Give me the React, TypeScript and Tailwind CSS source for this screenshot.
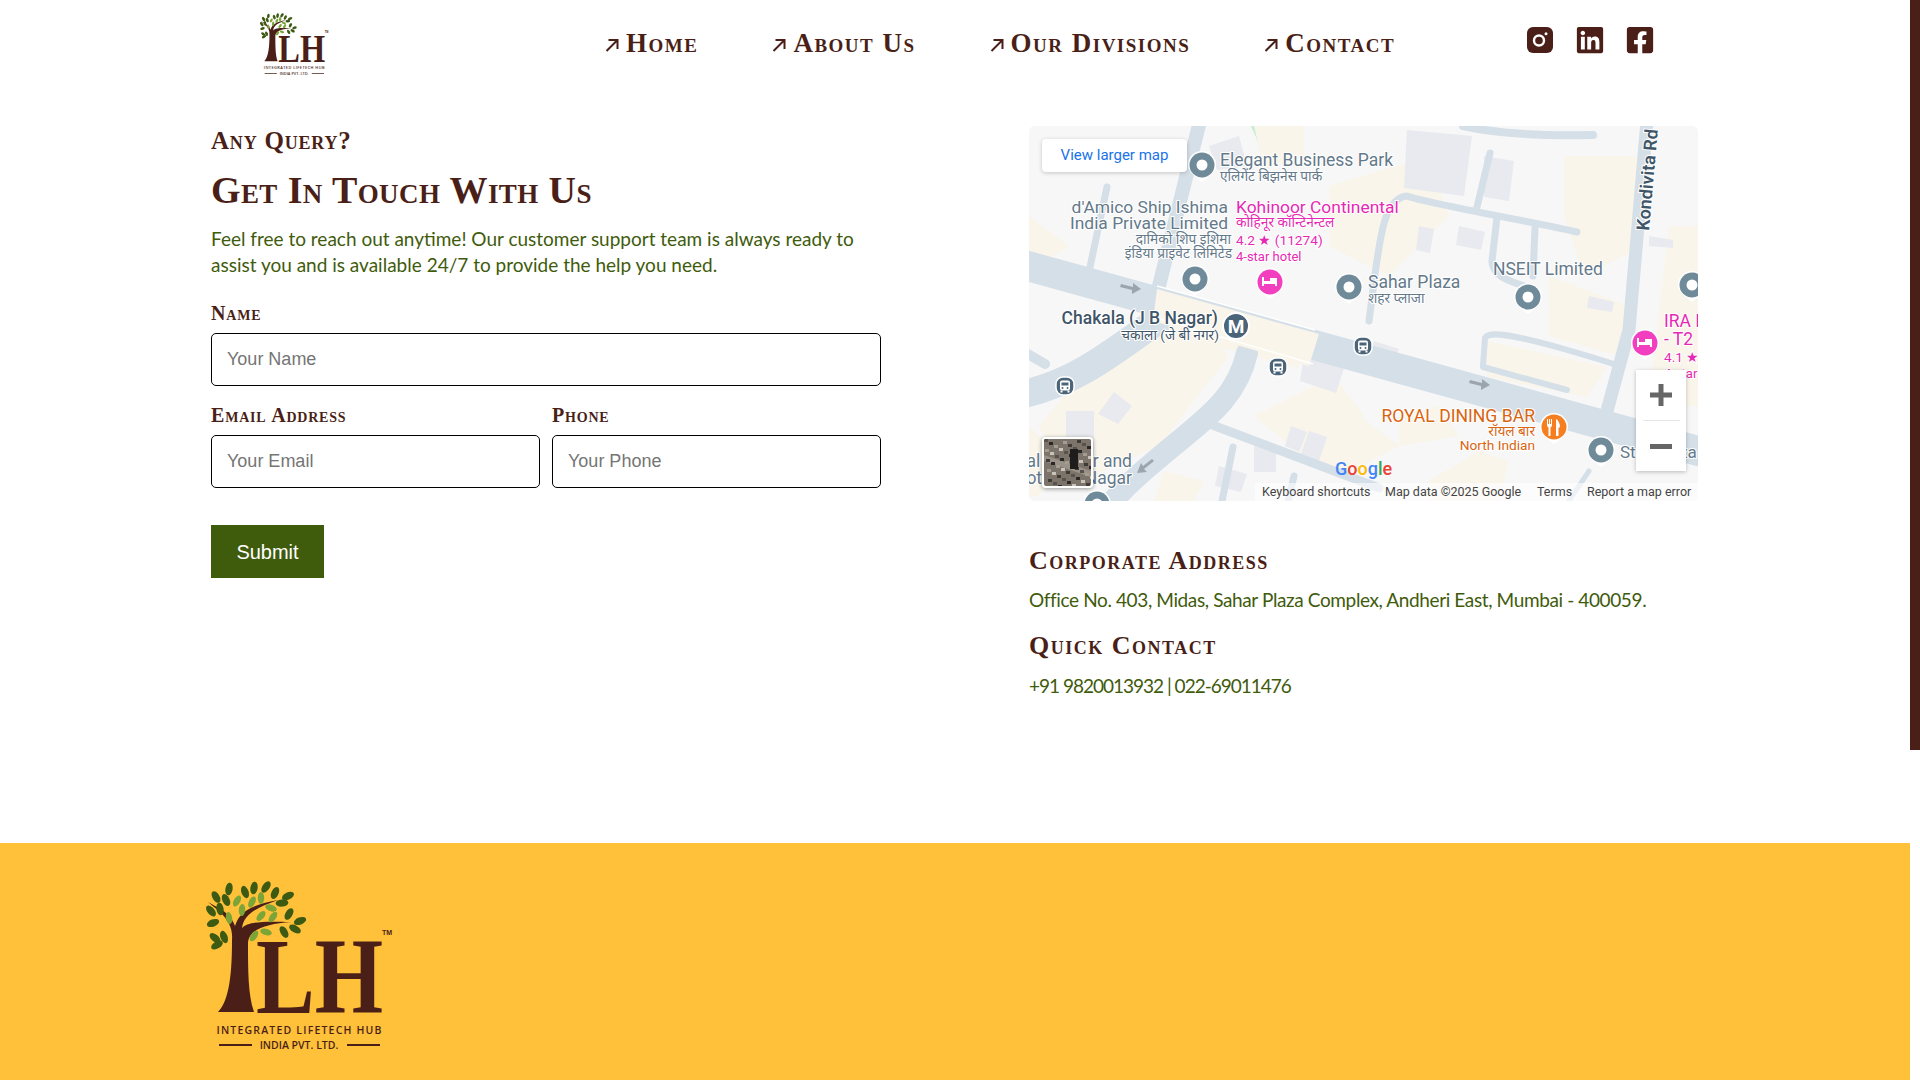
import { FaFacebookSquare, FaLinkedin } from 'react-icons/fa'

const NAV = ['Home', 'About Us', 'Our Divisions', 'Contact']

const DARK_LEAVES: number[][] = [
  [39, 19, 10], [55, 22, -20], [64, 18, 10], [76, 17, 35], [85, 23, 25], [98, 26, 65], [92, 33, 85],
  [26, 27, -30], [36, 30, -25], [21, 41, -40], [30, 39, -10], [99, 44, 30], [110, 51, 70], [23, 53, 70],
  [105, 59, -60], [94, 62, -30], [25, 68, -50], [34, 67, -20], [27, 75, 60],
]
const LIGHT_LEAVES: number[][] = [
  [47, 31, 30], [62, 32, 25], [71, 28, 0], [52, 40, 5], [39, 48, -10], [81, 38, -70], [83, 47, 35],
  [71, 46, 40], [76, 62, -75], [64, 66, 35],
]

function FullLogo({ className }: { className: string }) {
  return (
    <svg viewBox="0 0 220 190" className={className} fill="#4a1f17">
      <path d="M42 70 C43 58 38 50 30 42 L18 32 L32 40 C38 44 43 50 45 56 C49 44 56 36 88 30 C66 38 54 44 52 58 C58 52 70 51 101 52 C78 54 60 58 58 72 C58 100 58 125 64 142 L28 142 C40 130 42 100 42 70 Z" />
      {DARK_LEAVES.map(([x, y, r], i) => (
        <ellipse key={i} cx={x} cy={y} rx="3.6" ry="6.4" fill="#3d5a12" transform={`rotate(${r} ${x} ${y})`} />
      ))}
      {LIGHT_LEAVES.map(([x, y, r], i) => (
        <ellipse key={i} cx={x} cy={y} rx="3.2" ry="6" fill="#7ba537" transform={`rotate(${r} ${x} ${y})`} />
      ))}
      <text x="66" y="143" fontFamily="Liberation Serif, serif" fontSize="108" fontWeight="700" textLength="127" lengthAdjust="spacingAndGlyphs">
        LH
      </text>
      <text x="192" y="65" fontFamily="Liberation Sans, sans-serif" fontSize="7" fontWeight="700">
        TM
      </text>
      <text x="109" y="164" textAnchor="middle" fontFamily="Open Sans, sans-serif" fontSize="10.5" fontWeight="600" textLength="165" lengthAdjust="spacing">
        INTEGRATED LIFETECH HUB
      </text>
      <text x="109" y="179" textAnchor="middle" fontFamily="Open Sans, sans-serif" fontSize="10.5" fontWeight="600">
        INDIA PVT. LTD.
      </text>
      <rect x="29" y="174" width="33" height="2" />
      <rect x="157" y="174" width="33" height="2" />
    </svg>
  )
}

function Instagram() {
  return (
    <svg viewBox="0 0 26 26" className="h-[26px] w-[26px]">
      <rect width="26" height="26" rx="6" fill="#4a1f17" />
      <circle cx="12" cy="13.5" r="5" fill="none" stroke="#fff" strokeWidth="2.4" />
      <circle cx="19" cy="6.8" r="1.5" fill="#fff" />
    </svg>
  )
}

function Pin({ x, y, color = '#6f8a99', hole = true }: { x: number; y: number; color?: string; hole?: boolean }) {
  return (
    <g>
      <path d={`M${x - 14} ${y} a14 14 0 1 1 28 0 c0 6 -6 11 -14 17 c-8 -6 -14 -11 -14 -17 Z`} fill="#fff" />
      <circle cx={x} cy={y} r="12.5" fill={color} />
      {hole && <circle cx={x} cy={y} r="5.5" fill="#fff" />}
    </g>
  )
}

function Bus({ x, y }: { x: number; y: number }) {
  return (
    <g>
      <rect x={x - 9} y={y - 9} width="18" height="18" rx="7" fill="#4c6479" stroke="#fff" strokeWidth="1.5" />
      <rect x={x - 5} y={y - 5.500} width="10" height="10" rx="2" fill="#fff" />
      <rect x={x - 3.5} y={y - 3.500} width="7" height="3" fill="#4c6479" />
      <circle cx={x - 2.5} cy={y + 2} r="1" fill="#4c6479" />
      <circle cx={x + 2.5} cy={y + 2} r="1" fill="#4c6479" />
      <rect x={x - 4.5} y={y + 4.500} width="2" height="2" fill="#fff" />
      <rect x={x + 2.5} y={y + 4.500} width="2" height="2" fill="#fff" />
    </g>
  )
}

const LABELS: { x: number; y: number; t: string; s?: number; c?: string; end?: boolean; w?: number }[] = [
  { x: 191, y: 40, t: 'Elegant Business Park', s: 17.5 },
  { x: 191, y: 55, t: 'एलिगेंट बिझनेस पार्क', s: 13.7 },
  { x: 199, y: 87, t: "d'Amico Ship Ishima", s: 17.4, end: true },
  { x: 199, y: 103, t: 'India Private Limited', s: 17.4, end: true },
  { x: 202, y: 118, t: 'दामिको शिप इशिमा', s: 13.7, end: true },
  { x: 203, y: 132, t: 'इंडिया प्राइवेट लिमिटेड', s: 13.7, end: true },
  { x: 207, y: 87, t: 'Kohinoor Continental', s: 17.4, c: '#e629b3' },
  { x: 207, y: 101, t: 'कोहिनूर कॉन्टिनेन्टल', s: 13.7, c: '#e629b3' },
  { x: 207, y: 119, t: '4.2 ★ (11274)', s: 13.7, c: '#e629b3' },
  { x: 207, y: 135, t: '4-star hotel', s: 13, c: '#e629b3' },
  { x: 189, y: 198, t: 'Chakala (J B Nagar)', s: 17.5, c: '#3f5568', end: true, w: 500 },
  { x: 190, y: 214, t: 'चकाला (जे बी नगर)', s: 13.7, c: '#3f5568', end: true },
  { x: 339, y: 162, t: 'Sahar Plaza', s: 17.5 },
  { x: 339, y: 177, t: 'शहर प्लाजा', s: 13.7 },
  { x: 464, y: 149, t: 'NSEIT Limited', s: 17.5 },
  { x: 635, y: 201, t: 'IRA Inn', s: 17.5, c: '#e629b3' },
  { x: 635, y: 219, t: '- T2', s: 17.5, c: '#e629b3' },
  { x: 635, y: 236, t: '4.1 ★', s: 13.7, c: '#e629b3' },
  { x: 635, y: 252, t: '4-star', s: 13, c: '#e629b3' },
  { x: 506, y: 296, t: 'ROYAL DINING BAR', s: 17.6, c: '#d9640f', end: true },
  { x: 506, y: 310, t: 'रॉयल बार', s: 13.7, c: '#d9640f', end: true },
  { x: 506, y: 324, t: 'North Indian', s: 13.7, c: '#d9640f', end: true },
  { x: 591, y: 332, t: 'Star Plaza', s: 17 },
  { x: 103, y: 341, t: 'Local Bazaar and', s: 17.5, end: true },
  { x: 103, y: 358, t: 'Plots J B Nagar', s: 17.5, end: true },
]

const BEIGE = [
  'M225 0h50v30l-40 12z', 'M300 60l100-30 20 60-60 60-60-30z', 'M535 30h80v90l-60 30-20-60z',
  'M640 100h29v180h-50z', 'M128 170l160 40-20 32-150-40z', 'M60 240l100-50 40 40-70 90-90 40-30-60z',
  'M225 290l80-40 30 40-60 40z', 'M270 270l60 20 40 30-60 30-60-40z', 'M458 215l120 26-20 30-100-20z',
  'M520 150l80 30-10 50-70-20z', 'M0 90l40 30-30 20H0z', 'M0 300l30 30-20 40H0z', 'M135 345l40 10-10 20h-40z',
  'M400 355l50-30 30 10-10 40h-70z', 'M370 290l40-10 20 30-60 10z',
]
const BLOCKS = [
  'M378 4l65 6-8 60-60-8z', 'M455 30l30 5-5 40-25-4z', 'M390 100l15 3-4 24-14-3z', 'M430 100l26 6-4 18-25-5z',
  'M180 20l30-10 8 30-30 4z', 'M275 230l40 12-8 25-36-12z', 'M85 266l18 14-14 18-20-10z', 'M37 285h28v45H37z',
  'M262 300l16 6-8 20-14-6z', 'M280 305l18 6-10 30-18-8z', 'M190 340l28 8-6 18-26-6z', 'M225 320l22 4v22h-22z',
  'M620 110l24 4v8l-24-2z', 'M345 215l25 8-6 14-24-8z', 'M560 170l25 6-2 10-25-4z',
]
const ROADS: [string, number][] = [
  ['M-5 139L680 328', 30],
  ['M-5 268C50 255 85 225 135 190', 28],
  ['M-5 226L16 238', 10],
  ['M218 227C208 270 180 290 150 315C120 340 95 360 80 380', 22],
  ['M178 297L350 362', 9],
  ['M204 321L192 380', 7],
  ['M265 350L258 380', 7],
  ['M171 -5L130 160', 14],
  ['M78 61L61 141', 7],
  ['M434 0C470 8 520 10 564 9', 8],
  ['M340 195C350 120 352 72 378 70C400 78 500 95 548 106', 7],
  ['M461 27L448 81', 7],
  ['M468 91L463 135C463 150 480 155 495 160', 7],
  ['M506 102L504 150', 7],
  ['M618 -5L600 204L578 285', 13],
  ['M454 240L456 212C460 205 480 205 591 240', 6],
  ['M454 241L538 264', 6],
  ['M560 345L540 375', 5],
]

// speckle for the satellite thumbnail
const SPECKLE = Array.from({ length: 70 }, (_, i) => ({
  x: (i * 17) % 47,
  y: (i * 29) % 47,
  f: ['#3f3b36', '#a49c90', '#57524b', '#c9c3b9', '#2a2826'][i % 5],
}))

function GoogleMap() {
  return (
    <div className="relative h-[375px] w-[669px] overflow-hidden rounded-md bg-[#f7f7f7] font-['Roboto',sans-serif]">
      <svg viewBox="0 0 669 375" className="block h-full w-full">
        <rect width="669" height="375" fill="#f7f7f7" />
        <path d="M222 0h28l-8 22-12-4z" fill="#c3efd0" />
        {BEIGE.map((d, i) => <path key={i} d={d} fill="#f9f5ea" />)}
        {BLOCKS.map((d, i) => <path key={i} d={d} fill="#e8eaef" />)}
        {ROADS.map(([d, w], i) => (
          <path key={i} d={d} fill="none" stroke="#d5dfe8" strokeWidth={w} strokeLinecap="round" strokeLinejoin="round" />
        ))}
        <path d="M128 163L290 208L280 240L124 195Z" fill="#f9f5ea" />
        <path d="M92 158l12 3 0-4 8 6-9 5 0-4-12-3zM441 254l12 3 0-4 8 6-9 5 0-4-12-3zM125 335l-10 8 3 3-10 1 4-10 2 3 9-7z" fill="#9ca5ad" />
        <path d="M128 160L286 204M128 192L284 238" stroke="#fff" strokeWidth="1.5" />
        {LABELS.map((l, i) => (
          <text
            key={i}
            x={l.x}
            y={l.y}
            fontSize={l.s}
            fontWeight={l.w ?? 400}
            fontFamily="Roboto, 'Noto Sans', sans-serif"
            textAnchor={l.end ? 'end' : 'start'}
            fill={l.c ?? '#64798a'}
            stroke="#fff"
            strokeWidth="2"
            paintOrder="stroke"
          >
            {l.t}
          </text>
        ))}
        <text
          transform="translate(620 105) rotate(-85)"
          fontSize="18"
          fontWeight="600"
          fontFamily="Roboto, sans-serif"
          fill="#3f5568"
          stroke="#fff"
          strokeWidth="2"
          paintOrder="stroke"
        >
          Kondivita Rd
        </text>
        <Pin x={173} y={39} />
        <Pin x={166} y={153} />
        <Pin x={320} y={161} />
        <Pin x={499} y={171} />
        <Pin x={663} y={159} />
        <Pin x={572} y={324} />
        <Pin x={68} y={378} />
        <Pin x={241} y={156} color="#f23fc0" hole={false} />
        <path d="M233 151h2v4h6v-3h7v8h-2v-2h-11v2h-2z" fill="#fff" />
        <Pin x={616} y={217} color="#f23fc0" hole={false} />
        <path d="M608 212h2v4h6v-3h7v8h-2v-2h-11v2h-2z" fill="#fff" />
        <Pin x={525} y={301} color="#f57f20" hole={false} />
        <path d="M518 293h1v5h1v-5h1v5h1v-5h1v6c0 1.500-1 2-1.500 2.500v8.500h-2v-8.500c-.5-.5-1.500-1-1.500-2.500zM527 293c2 1 4 4 4 8l-1.500 1v8h-2.500z" fill="#fff" />
        <circle cx="207" cy="200" r="13" fill="#4c6479" stroke="#fff" strokeWidth="2" />
        <text x="207" y="207" textAnchor="middle" fontSize="19" fontWeight="700" fill="#fff" fontFamily="Roboto, sans-serif">M</text>
        <Bus x={36} y={260} />
        <Bus x={249} y={241} />
        <Bus x={334} y={220} />
      </svg>

      <button className="absolute left-[13px] top-[13px] flex h-[33px] w-[145px] items-center justify-center rounded-sm bg-white text-[15px] text-[#1a73e8] shadow-[0_1px_4px_rgba(0,0,0,0.2)]">
        View larger map
      </button>

      <div className="absolute left-[13px] top-[311px] h-[51px] w-[51px] overflow-hidden rounded-sm border-2 border-white shadow-[0_1px_4px_rgba(0,0,0,0.4)]">
        <svg viewBox="0 0 47 47" className="block h-full w-full">
          <rect width="47" height="47" fill="#7c746a" />
          <path d="M0 22l47 16v-6L0 16z" fill="#9a9288" />
          {SPECKLE.map((s, i) => <rect key={i} x={s.x} y={s.y} width="4" height="3" fill={s.f} />)}
          <rect x="26" y="10" width="8" height="20" fill="#1f1d1c" />
        </svg>
      </div>

      <div className="absolute left-[607px] top-[244px] flex h-[101px] w-[50px] flex-col items-center bg-white shadow-[0_1px_4px_rgba(0,0,0,0.25)]">
        <div className="flex h-[50px] w-full items-center justify-center">
          <svg viewBox="0 0 22 22" className="h-[22px] w-[22px]"><path d="M8.500 0h5v8.500H22v5h-8.500V22h-5v-8.500H0v-5h8.500z" fill="#666" /></svg>
        </div>
        <div className="h-px w-[37px] bg-[#e6e6e6]" />
        <div className="flex h-[50px] w-full items-center justify-center">
          <div className="h-[5px] w-[22px] bg-[#666]" />
        </div>
      </div>

      <div className="absolute left-[306px] top-[333px] text-[18px] font-medium leading-[20px]">
        <span className="text-[#4285f4]">G</span>
        <span className="text-[#ea4335]">o</span>
        <span className="text-[#fbbc05]">o</span>
        <span className="text-[#4285f4]">g</span>
        <span className="text-[#34a853]">l</span>
        <span className="text-[#ea4335]">e</span>
      </div>

      <div className="absolute bottom-0 left-[226px] flex h-[18px] w-[443px] items-center bg-white/60 pl-[7px] text-[12.500px] text-[#444]">
        <span className="w-[123px]">Keyboard shortcuts</span>
        <span className="w-[152px]">Map data ©2025 Google</span>
        <span className="w-[50px]">Terms</span>
        <span>Report a map error</span>
      </div>
    </div>
  )
}

const HEADING = "font-['Liberation_Serif',serif] [font-variant:small-caps] text-[#4a1f17]"

function Field({ label, placeholder }: { label: string; placeholder: string }) {
  return (
    <label className="flex min-w-0 flex-1 flex-col">
      <span className={`${HEADING} text-[20px] font-semibold leading-[24px] tracking-[0.8px]`}>{label}</span>
      <input
        placeholder={placeholder}
        className="mt-[8px] h-[53px] w-full rounded-[5px] border border-black px-[15px] font-['Liberation_Sans',sans-serif] text-[18px] outline-none placeholder:text-[#757575]"
      />
    </label>
  )
}

export default function App() {
  return (
    <div className="flex h-screen overflow-hidden bg-white font-['Lato',sans-serif]">
      <div className="flex w-[1910px] flex-col">
        <header className="flex h-[126px] items-start pl-[254px]">
          <FullLogo className="mt-[9px] h-[70px] w-[81px]" />
          <nav className={`${HEADING} ml-[270px] mt-[28px] flex w-[798px] gap-[74px] text-[27px] font-semibold leading-[30px] tracking-[1.5px]`}>
            {NAV.map((n) => (
              <a key={n} className="flex items-center gap-[7px]">
                <svg viewBox="0 0 14 14" className="mt-[3px] h-[14px] w-[14px]" fill="none" stroke="currentColor" strokeWidth="2">
                  <path d="M1.500 13L12 2.500M3.500 2H12.500V11" />
                </svg>
                {n}
              </a>
            ))}
          </nav>
          <div className="ml-[124px] mt-[27px] flex gap-[24px] text-[#4a1f17]">
            <Instagram />
            <FaLinkedin className="mx-[-2px] my-[-2px] h-[30px] w-[30px]" />
            <FaFacebookSquare className="mx-[-2px] my-[-2px] h-[30px] w-[30px]" />
          </div>
        </header>

        <main className="flex h-[717px] pl-[211px]">
          <section className="w-[670px]">
            <h3 className={`${HEADING} pt-px text-[25px] font-semibold leading-[28px] tracking-[0.8px]`}>Any Query?</h3>
            <h2 className={`${HEADING} mt-[13px] text-[38px] font-bold leading-[44px] tracking-[0.4px]`}>Get In Touch With Us</h2>
            <p className="mt-[14px] text-[19px] leading-[26px] text-[#3f5b0c]">
              Feel free to reach out anytime! Our customer support team is always ready to assist you and is available
              24/7 to provide the help you need.
            </p>
            <form className="mt-[23px]">
              <Field label="Name" placeholder="Your Name" />
              <div className="mt-[17px] flex gap-[12px]">
                <Field label="Email Address" placeholder="Your Email" />
                <Field label="Phone" placeholder="Your Phone" />
              </div>
              <button type="button" className="mt-[37px] h-[53px] w-[113px] bg-[#3f5b0c] font-['Liberation_Sans',sans-serif] text-[20px] text-white">
                Submit
              </button>
            </form>
          </section>

          <section className="ml-[148px] w-[669px]">
            <GoogleMap />
            <h3 className={`${HEADING} mt-[44px] text-[26px] font-semibold leading-[32px] tracking-[1.5px]`}>Corporate Address</h3>
            <p className="mt-[10px] text-[19px] leading-[26px] tracking-[-0.38px] text-[#3f5b0c]">
              Office No. 403, Midas, Sahar Plaza Complex, Andheri East, Mumbai - 400059.
            </p>
            <h3 className={`${HEADING} mt-[17px] text-[26px] font-semibold leading-[32px] tracking-[1.5px]`}>Quick Contact</h3>
            <p className="mt-[11px] text-[19px] leading-[26px] tracking-[-1px] text-[#3f5b0c]">+91 9820013932 | 022-69011476</p>
          </section>
        </main>

        <footer className="h-[237px] bg-[#ffc03a] pl-[190px] pt-[27px]">
          <FullLogo className="h-[190px] w-[220px]" />
        </footer>
      </div>

      {/* scrollbar thumb */}
      <div className="w-[10px]">
        <div className="h-[750px] bg-[#4a1f17]" />
      </div>
    </div>
  )
}
